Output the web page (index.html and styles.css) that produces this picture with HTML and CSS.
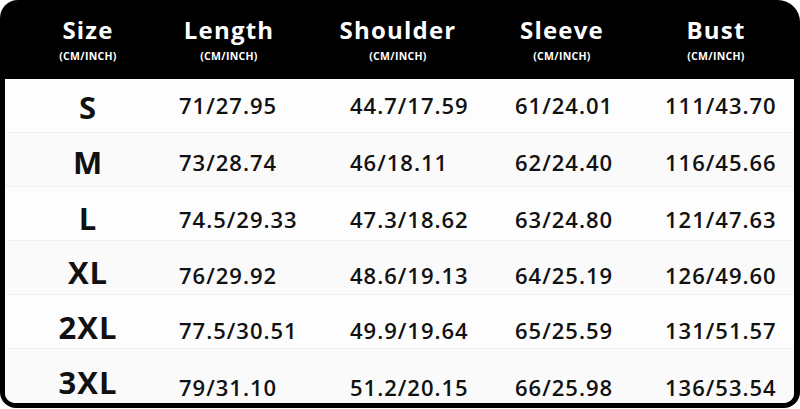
FILE: index.html
```html
<!DOCTYPE html>
<html lang="en">
<head>
<meta charset="utf-8">
<title>Size chart</title>
<link rel="stylesheet" href="styles.css">
</head>
<body>
<div class="frame">
  <div class="head">
    <div class="hcell"><span class="htitle">Size</span><span class="hsub">(CM/INCH)</span></div>
    <div class="hcell"><span class="htitle">Length</span><span class="hsub">(CM/INCH)</span></div>
    <div class="hcell"><span class="htitle">Shoulder</span><span class="hsub">(CM/INCH)</span></div>
    <div class="hcell"><span class="htitle">Sleeve</span><span class="hsub">(CM/INCH)</span></div>
    <div class="hcell"><span class="htitle">Bust</span><span class="hsub">(CM/INCH)</span></div>
  </div>
  <div class="body">
    <div class="row r0"><div class="size">S</div><div class="val">71/27.95</div><div class="val">44.7/17.59</div><div class="val">61/24.01</div><div class="val">111/43.70</div></div>
    <div class="row r1"><div class="size">M</div><div class="val">73/28.74</div><div class="val">46/18.11</div><div class="val">62/24.40</div><div class="val">116/45.66</div></div>
    <div class="row r2"><div class="size">L</div><div class="val">74.5/29.33</div><div class="val">47.3/18.62</div><div class="val">63/24.80</div><div class="val">121/47.63</div></div>
    <div class="row r3"><div class="size">XL</div><div class="val">76/29.92</div><div class="val">48.6/19.13</div><div class="val">64/25.19</div><div class="val">126/49.60</div></div>
    <div class="row r4"><div class="size">2XL</div><div class="val">77.5/30.51</div><div class="val">49.9/19.64</div><div class="val">65/25.59</div><div class="val">131/51.57</div></div>
    <div class="row r5"><div class="size">3XL</div><div class="val">79/31.10</div><div class="val">51.2/20.15</div><div class="val">66/25.98</div><div class="val">136/53.54</div></div>
  </div>
</div>
</body>
</html>
```
FILE: styles.css
```css
html, body {
  margin: 0;
  padding: 0;
  background: #ffffff;
}
body {
  width: 800px;
  height: 409px;
  overflow: hidden;
  font-family: "Open Sans", "Noto Sans", "DejaVu Sans", sans-serif;
}
.frame {
  width: 800px;
  height: 408px;
  box-sizing: border-box;
  background: #000;
  border-radius: 18px 22px 16px 16px;
  padding: 0 6px 5px 5px;
  display: flex;
  flex-direction: column;
}
.head {
  height: 79px;
  display: grid;
  grid-template-columns: 96px 186px 152px 176px 132px;
  padding-left: 35px;
  color: #fff;
}
.hcell {
  display: flex;
  flex-direction: column;
  align-items: center;
}
.htitle {
  font-size: 24px;
  font-weight: 700;
  line-height: 30px;
  margin-top: 15px;
  letter-spacing: 1.2px;
}
.hsub {
  font-size: 10.5px;
  font-weight: 700;
  line-height: 12px;
  margin-top: 5px;
  letter-spacing: 0.3px;
}
.body {
  flex: 1;
  background: #fbfbfb;
  border-radius: 0 0 10px 10px;
  display: flex;
  flex-direction: column;
  overflow: hidden;
}
.row {
  height: 54px;
  display: grid;
  grid-template-columns: 166px 171px 165px 150px 137px;
  align-items: center;
  color: #111;
  border-bottom: 1px solid #f1f1f1;
  box-sizing: border-box;
  --dv: 0px;
  --ds: 0px;
}
.row:last-child { border-bottom: none; }
.row:nth-child(odd) { background: #fdfdfd; }
.row:nth-child(even) { background: #fafafa; }
.r0 { --dv: -1px; --ds: 1.5px; }
.r1 { --dv: 2.5px; --ds: 2.5px; }
.r2 { --dv: 5px; --ds: 4px; }
.r3 { --dv: 7px; --ds: 4.5px; }
.r4 { --dv: 8.5px; --ds: 5px; }
.r5 { --dv: 10.5px; --ds: 6px; }
.size {
  text-align: center;
  font-size: 31px;
  font-weight: 700;
  line-height: 36px;
  letter-spacing: 1px;
  margin-top: calc(var(--ds) * 2);
}
.val {
  padding-left: 8px;
  font-size: 22px;
  font-weight: 600;
  line-height: 28px;
  letter-spacing: 1px;
  margin-top: calc(var(--dv) * 2);
}
```
